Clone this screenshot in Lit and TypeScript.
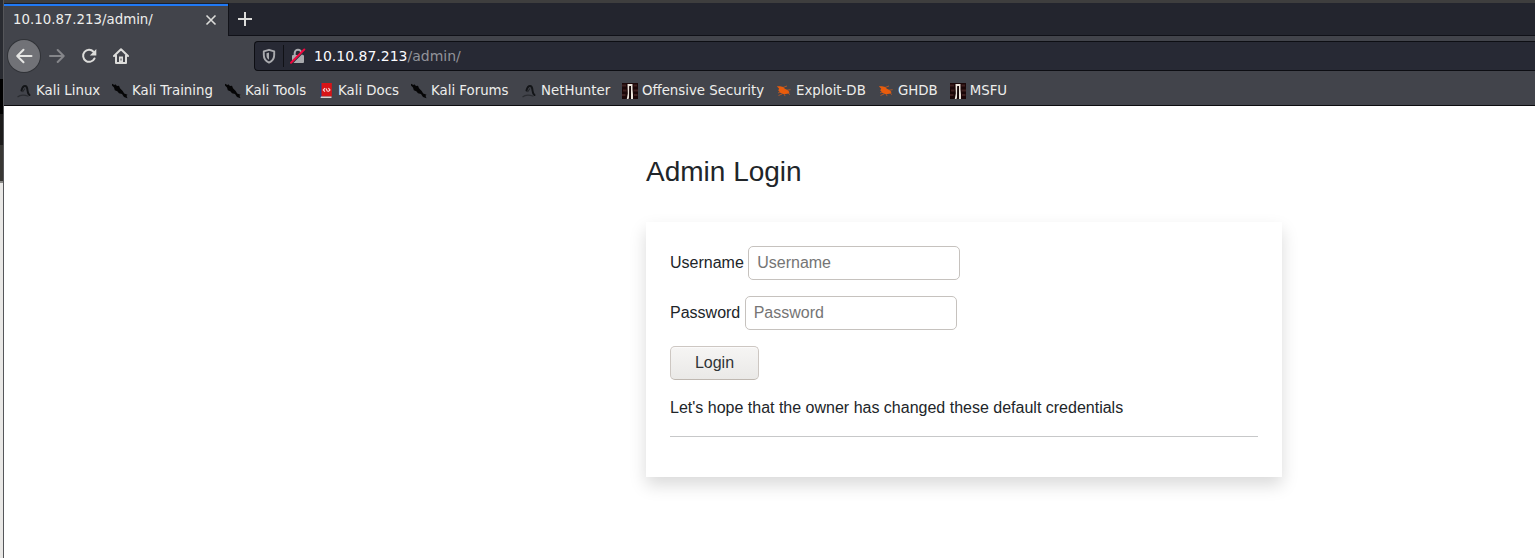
import { LitElement, html, css, svg } from "lit";
import { customElement } from "lit/decorators.js";

const icons: Record<string, unknown> = {
  dragon: svg`<path d="M5.500 7.500C6.300 4.300 7.500 3 9 3c2 0 2.300 1.800 2.500 4.500.2 2 .8 3.500 2 4.500" stroke="#131518" stroke-width="2" fill="none" stroke-linecap="round"/><path d="M9 5.500 6.500 9" stroke="#24262a" stroke-width="1.200"/><path d="M1.500 14c2.500-2.200 7-2.200 11-.8" stroke="#2b2d32" stroke-width="1.100" fill="none"/>`,
  kali: svg`<path d="M0 .7 2.500 2l.8-.8L5 3l2-.2 1 2.400 2.700 2.800 1.500 2.500 3.300 1.300-1 1 1 2.400-3.500-1.200-2-3-3-.8-1.700-2-2.500-1-.8-2.700L0 2.500z" fill="#050506"/>`,
  book: svg`<rect x="2" y="0" width="3" height="14.500" fill="#24427c"/><rect x="3.500" y="0" width="10.300" height="13.500" fill="#d81418"/><path d="M3 13.500h10.500V15H2.500z" fill="#d9d2d2"/><path d="M7 5.200 5.300 7 7 8.600M10.400 5.200 12 7l-1.700 1.600M8 5.500l1.500 3" stroke="#f8dede" stroke-width="1.100" fill="none"/>`,
  gate: svg`<rect width="16" height="16" fill="#1b0708"/><path d="M0 2.500h4M1 7.500h3.500M0 12h3.500M11.500 2.500H15M11.500 7.500H16M12 12h3.500" stroke="#56302f" stroke-width="2" opacity=".6"/><path d="M5.500 1h5v5.500l.5 5V16H9V3.500H7.500V13L6.500 16H4.800l1-5.500z" fill="#eee6dd"/><path d="M7.300 3H9v12.500H7z" fill="#140607"/>`,
  bug: svg`<path d="M.8 3.200 4 3.200l3.300.8 1.500 1.800 2.800 1.200 2 2.200-2.100 1.600-3.800.5L4.500 10 2.200 7.200l1-1.400z" fill="#e95c0c"/><path d="m7 4.500 4-1.500M11 7.200l3.600-.5M4 9 2 10M6.500 10.800 2.500 12.500M8.500 11.300l.5 1.800M12 10.200l2 1.300" stroke="#bb5924" stroke-width=".9" fill="none"/>`,
};

const bookmarks = [
  ["dragon", "Kali Linux", 96],
  ["kali", "Kali Training", 113],
  ["kali", "Kali Tools", 93],
  ["book", "Kali Docs", 93],
  ["kali", "Kali Forums", 110],
  ["dragon", "NetHunter", 101],
  ["gate", "Offensive Security", 154],
  ["bug", "Exploit-DB", 102],
  ["bug", "GHDB", 71.700],
  ["gate", "MSFU", 70],
] as const;

@customElement("browser-chrome")
class BrowserChrome extends LitElement {
  static styles = css`
    :host { display: block; height: 106px; box-sizing: border-box; background: #42444b; border-bottom: 1px solid #0c0c0f; font-family: "DejaVu Sans", sans-serif; color: #eeeeec; }
    svg { display: block; flex: none; }
    .tabs { height: 36px; box-sizing: border-box; border-top: 3px solid #3e3e3e; display: flex; background: #23252e; }
    .tab { width: 224px; box-sizing: border-box; height: 33px; display: flex; align-items: center; justify-content: space-between; padding: 1px 11px 0 9px; background: #42444b; font-size: 13.33px; white-space: nowrap; box-shadow: inset 0 1px #1a2130, inset 0 3px #2079f5; }
    .title { padding-bottom: 2px; }
    .rest { flex: 1; border-left: 1px solid #121319; border-bottom: 1px solid #101118; padding: 8px 0 0 8px; }
    .nav { height: 40px; display: flex; align-items: center; }
    .back { width: 32px; height: 32px; margin-left: 4px; border-radius: 50%; background: #717277; box-shadow: 0 0 0 1px #313338; display: grid; place-items: center; }
    .forward { margin-left: 9px; }
    .tool { margin-left: 16px; }
    .url { flex: 1; height: 30px; margin-left: 125px; box-sizing: border-box; border: 1px solid #0d0e13; border-right: 0; border-radius: 4px 0 0 4px; background: #272934; display: flex; align-items: center; font-size: 14px; }
    .shield { margin-left: 6px; }
    .line { width: 1px; height: 22px; background: #101116; margin: 0 6px 0 6px; }
    .address { margin-left: 8px; color: #fbfbfe; white-space: pre; }
    .path { color: #92939a; }
    .marks { display: flex; padding-left: 12px; height: 28px; align-items: center; }
    .mark { display: flex; align-items: center; gap: 4px; flex: none; font-size: 13.33px; white-space: nowrap; }
    .mark svg { margin-top: 2px; }
  `;
  render() {
    return html`
      <div class="tabs">
        <div class="tab"><span class="title">10.10.87.213/admin/</span>
          <svg width="12" height="12" viewBox="0 0 12 12"><path d="m1.500 1.500 9 9m0-9-9 9" stroke="#dcdcda" stroke-width="1.600"/></svg>
        </div>
        <div class="rest"><svg width="16" height="16" viewBox="0 0 16 16"><path d="M8 1v14M1 8h14" stroke="#dcdcda" stroke-width="2"/></svg></div>
      </div>
      <div class="nav">
        <div class="back"><svg width="18" height="18" viewBox="0 0 18 18"><path d="M16.500 9H2.500M8.500 2.700 2.200 9l6.300 6.300" fill="none" stroke="#e6e6e4" stroke-width="2" stroke-linejoin="round" stroke-linecap="round"/></svg></div>
        <svg class="forward" width="16" height="16" viewBox="0 0 16 16"><path d="M1 8h13.500M8.700 2 14.700 8l-6 6" fill="none" stroke="#85868a" stroke-width="2" stroke-linejoin="round" stroke-linecap="round"/></svg>
        <svg class="tool" width="16" height="16" viewBox="0 0 16 16"><path d="M12.500 3.700A6 6 0 1 0 13.500 10.500" fill="none" stroke="#dcdcda" stroke-width="2" stroke-linecap="round"/><path d="M15.300 1v6.500H8.800z" fill="#dcdcda"/></svg>
        <svg class="tool" width="16" height="16" viewBox="0 0 16 16"><path d="M1 8 8 1.200 15 8M3 7.500V15h10V7.500" fill="none" stroke="#dcdcda" stroke-width="2" stroke-linejoin="round" stroke-linecap="round"/><path d="M6 8.500h4V15H6z" fill="#dcdcda"/><path d="M7.500 10.500h1v2h-1z" fill="#42444b"/></svg>
        <div class="url">
          <svg class="shield" width="16" height="16" viewBox="0 0 16 16"><path d="M8 1.800 13.200 3.300V7c0 3.800-2 6.300-5.200 7.600C4.800 13.300 2.800 10.800 2.800 7V3.300z" fill="none" stroke="#a9aaae" stroke-width="1.900" stroke-linejoin="round"/><path d="M8 4.500v7.300C6 10.500 5.500 9 5.500 7V5.200z" fill="#a9aaae"/></svg>
          <div class="line"></div>
          <svg width="16" height="16" viewBox="0 0 16 16"><path d="M4.700 8V5a3.300 3.300 0 0 1 6.600 0v3" fill="none" stroke="#a9aaae" stroke-width="2"/><rect x="2" y="7" width="12" height="8" rx="1" fill="#a9aaae"/><path d="M1.500 15.800 15 2.300" stroke="#272934" stroke-width="1.500"/><path d="M1 14.800 14.300 1.500" stroke="#f0083f" stroke-width="2" stroke-linecap="round"/></svg>
          <div class="address">10.10.87.213<span class="path">/admin/</span></div>
        </div>
      </div>
      <div class="marks">
        ${bookmarks.map(([icon, label, width]) => html`<div class="mark" style="width:${width}px"><svg width="16" height="16" viewBox="0 0 16 16">${icons[icon]}</svg><span>${label}</span></div>`)}
      </div>`;
  }
}

@customElement("login-page")
class LoginPage extends LitElement {
  static styles = css`
    :host { display: block; flex: 1; background: #fff; color: #212529; font: 16px/24px "Liberation Sans", Arial, sans-serif; padding: 48px 0 0 642px; }
    h3 { font-size: 28px; line-height: 36px; font-weight: 400; margin: 0 0 32px; }
    .card { width: 636px; height: 255px; box-sizing: border-box; padding: 24px; box-shadow: 0 8px 16px rgba(0, 0, 0, .15); }
    .row { display: flex; align-items: center; gap: 4.400px; height: 34px; margin-bottom: 16px; }
    input { font: inherit; width: 212px; height: 34px; box-sizing: border-box; border: 1px solid #c6c2be; border-radius: 5px; padding: 0 8px; background: #fff; margin: 0; }
    input::placeholder { color: #757575; opacity: 1; }
    button { font: inherit; color: #2e3436; display: block; width: 89px; height: 34px; padding: 0; border: 1px solid #cdc7c2; border-bottom-color: #bfb8b1; border-radius: 5px; background: linear-gradient(#f6f5f4, #eae9e7); box-shadow: inset 0 1px #fbfafa; }
    p { margin: 16px 0; }
    hr { margin: 0; border: 0; border-top: 1px solid #c7c8c9; }
  `;
  render() {
    return html`
      <h3>Admin Login</h3>
      <div class="card">
        <div class="row"><label for="u">Username</label><input id="u" placeholder="Username" /></div>
        <div class="row"><label for="p">Password</label><input id="p" type="password" placeholder="Password" /></div>
        <button>Login</button>
        <p>Let's hope that the owner has changed these default credentials</p>
        <hr />
      </div>`;
  }
}

@customElement("app-root")
class AppRoot extends LitElement {
  static styles = css`
    :host { display: flex; width: 1535px; height: 558px; overflow: hidden; background: #fff; }
    .edge { width: 4px; flex: none; box-sizing: border-box; border-right: 1px solid #55565a; background: linear-gradient(#292b31 79px, #000 79px 114px, #1c1b1b 114px 145px, #383734 145px 181px, #8a8986 181px 183px, #e9e8e6 183px); }
    .window { flex: 1; display: flex; flex-direction: column; min-width: 0; }
  `;
  render() {
    return html`<div class="edge"></div><div class="window"><browser-chrome></browser-chrome><login-page></login-page></div>`;
  }
}
